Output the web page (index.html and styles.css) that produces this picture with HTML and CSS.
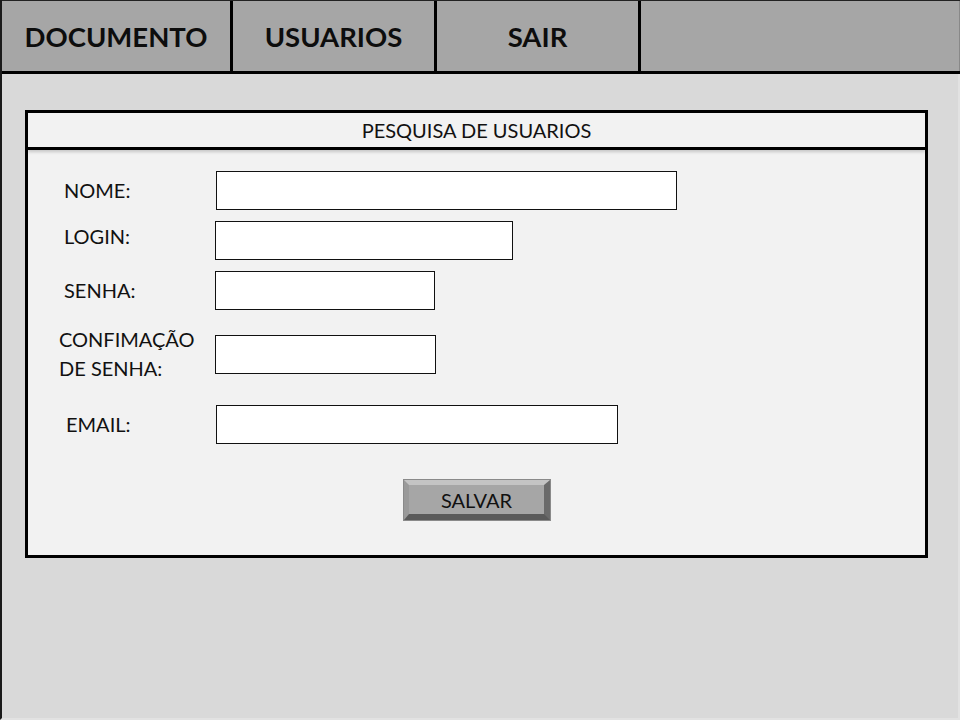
FILE: index.html
```html
<!DOCTYPE html>
<html lang="pt">
<head>
<meta charset="utf-8">
<title>Pesquisa de Usuarios</title>
<link rel="stylesheet" href="styles.css">
</head>
<body>
<div class="page">
  <nav class="nav">
    <div class="tab tab-doc">DOCUMENTO</div>
    <div class="tab tab-usr">USUARIOS</div>
    <div class="tab tab-sair">SAIR</div>
    <div class="tab tab-fill"></div>
  </nav>
  <main class="main">
    <section class="panel">
      <header class="panel-head">PESQUISA DE USUARIOS</header>
      <form class="form">
        <div class="row row-nome">
          <label class="lbl">NOME:</label>
          <input class="field w-nome" type="text">
        </div>
        <div class="row row-login">
          <label class="lbl lbl-up">LOGIN:</label>
          <input class="field w-login" type="text">
        </div>
        <div class="row row-senha">
          <label class="lbl">SENHA:</label>
          <input class="field w-senha" type="password">
        </div>
        <div class="row row-conf">
          <label class="lbl lbl-conf">CONFIMAÇÃO<br>DE SENHA:</label>
          <input class="field w-conf" type="password">
        </div>
        <div class="row row-email">
          <label class="lbl lbl-email">EMAIL:</label>
          <input class="field w-email" type="text">
        </div>
        <div class="actions">
          <button class="btn" type="button">SALVAR</button>
        </div>
      </form>
    </section>
  </main>
</div>
</body>
</html>
```
FILE: styles.css
```css
* { box-sizing: border-box; }
html, body { margin: 0; padding: 0; }
body {
  font-family: Lato, "Open Sans", "Liberation Sans", sans-serif;
  color: #111;
  background: #d9d9d9;
}
.page {
  width: 960px;
  height: 720px;
  background: #d9d9d9;
  border-left: 2px solid #1a1a1a;
  border-right: 2px solid #e2e2e2;
  border-bottom: 2px solid #e2e2e2;
  display: flex;
  flex-direction: column;
}
.nav {
  display: flex;
  height: 74px;
  flex: none;
  background: #a6a6a6;
  border-top: 1px solid #222;
  border-bottom: 3px solid #000;
  margin-right: -2px;
}
.tab {
  display: flex;
  align-items: center;
  justify-content: center;
  font-weight: 700;
  font-size: 27.5px;
  color: #0d0d0d;
  border-right: 3px solid #000;
  padding-top: 1px;
}
.tab-doc { width: 231px; }
.tab-usr { width: 204px; }
.tab-sair { width: 204px; }
.tab-fill { flex: 1; border-right: 1px solid #888; }

.main {
  padding: 36px 0 0 23px;
}
.panel {
  width: 903px;
  height: 448px;
  border: 3px solid #000;
  background: #f2f2f2;
  display: flex;
  flex-direction: column;
}
.panel-head {
  height: 37px;
  flex: none;
  border-bottom: 3px solid #000;
  display: flex;
  align-items: center;
  justify-content: center;
  font-size: 20px;
  color: #111;
  box-shadow: 0 2px 3px rgba(0,0,0,0.18);
  padding-bottom: 1px;
}
.form {
  display: flex;
  flex-direction: column;
  padding: 21px 0 0 36px;
}
.row {
  display: flex;
  align-items: center;
}
.row-login { margin-top: 11px; }
.row-senha { margin-top: 11px; }
.row-conf { margin-top: 15px; }
.row-email { margin-top: 22px; }
.lbl {
  width: 151px;
  font-size: 20px;
  color: #111;
  line-height: 29px;
}
.lbl-up { position: relative; top: -4px; }
.lbl-conf { margin-left: -5px; width: 156px; line-height: 29px; }
.lbl-email { margin-left: 2px; width: 149px; }
.field {
  height: 39px;
  border: 1.5px solid #111;
  background: #fff;
  border-radius: 0;
  padding: 0;
  margin: 0;
  outline: none;
}
.w-nome { width: 461px; margin-left: 1px; }
.w-login { width: 298px; }
.w-senha { width: 220px; }
.w-conf { width: 221px; }
.w-email { width: 402px; margin-left: 1px; }

.actions {
  display: flex;
  padding-left: 340px;
  margin-top: 36px;
}
.btn {
  width: 146px;
  height: 40px;
  background: #a6a6a6;
  border-style: solid;
  border-width: 5px 6px 6px 5px;
  border-color: #c4c4c4 #6a6a6a #5a5a5a #9a9a9a;
  outline: 1px solid #8a8a8a;
  font-family: Lato, "Open Sans", "Liberation Sans", sans-serif;
  font-size: 20px;
  color: #111;
  padding: 0;
  line-height: 26px;
}
```
